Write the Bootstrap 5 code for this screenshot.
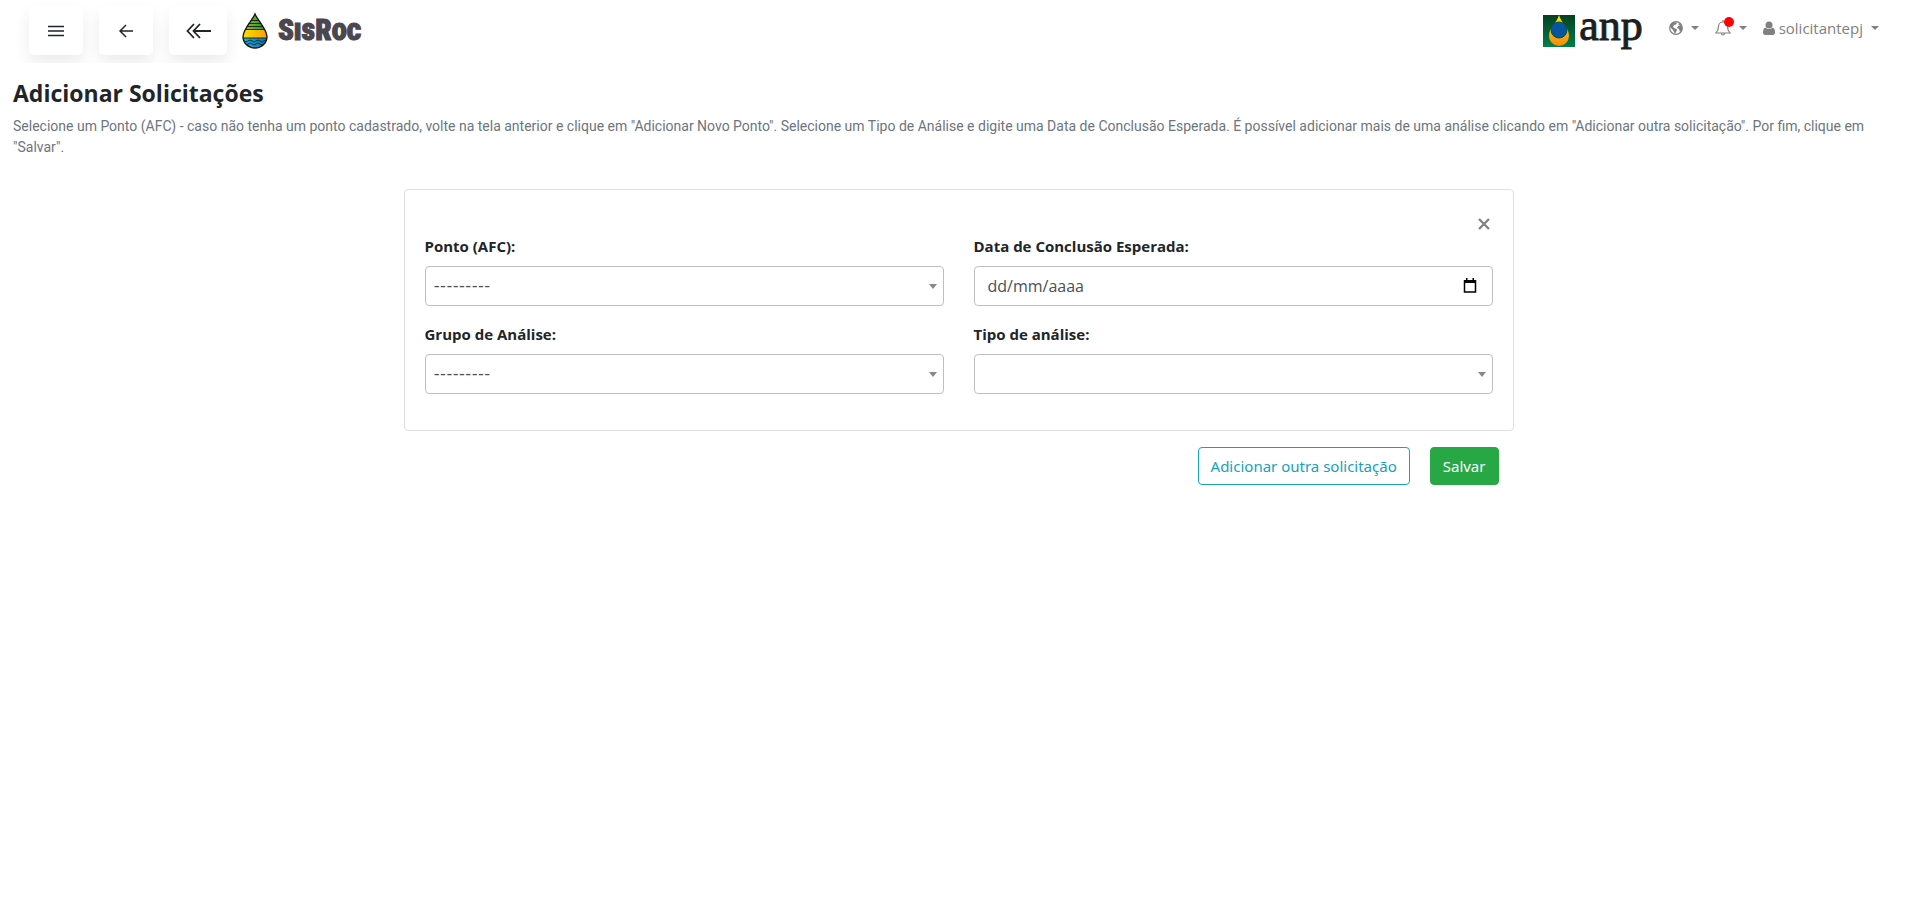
<!DOCTYPE html>
<html lang="pt-br">
<head>
<meta charset="utf-8">
<meta name="viewport" content="width=device-width, initial-scale=1">
<title>SisRoc - Adicionar Solicitações</title>
<link rel="stylesheet" href="https://cdn.jsdelivr.net/npm/bootstrap@5.3.0/dist/css/bootstrap.min.css">
<style>
  body { font-family: "Open Sans", "Noto Sans", sans-serif; font-size: 15px; line-height: 24px; color: #212529; background: #fff; }
  .topbar { height: 63px; padding: 6px 38px 8px 29px; overflow: hidden; }
  .nav-tile { width: 54px; height: 49px; border: 0; border-radius: 5px; background: #fff; color: #212529; box-shadow: 0 8px 16px rgba(0,0,0,.08); padding: 0 0 2px; }
  .nav-tile-wide { width: 58px; }
  .brand { margin-left: 15px; padding-top: 5px; gap: 10px; text-decoration: none; }
  .brand-name { font: 900 29px/38px "Roboto Condensed", "Open Sans Condensed", sans-serif; font-variant: small-caps; color: #4b4650; -webkit-text-stroke: 1px #4b4650; }
  .anp-link { margin-right: 26px; }
  .anp-name { font: 44px/39px "Liberation Serif", serif; color: #1d1d22; -webkit-text-stroke: 1px #1d1d22; }
  .tool-link { color: #808080; text-decoration: none; height: 24px; margin-top: 10px; }
  .tool-link .caret { border: 4px solid transparent; border-top-color: #808080; border-bottom: 0; }
  .alert-dot { position: absolute; top: -3px; right: -3px; width: 10px; height: 10px; border-radius: 50%; background: #f00; }
  .page-head { padding: 16px 40px 0 13px; }
  .page-title { font-size: 23px; line-height: 29px; font-weight: 700; margin: 0 0 8px; }
  .page-help { font-family: Roboto, sans-serif; font-size: 14px; line-height: 21px; color: #6c757d; margin: 0; }
  .form-area { max-width: 1110px; margin-top: 31px; }
  .request-card { border: 1px solid #dfdfdf; border-radius: 4px; padding: 20px; height: auto; }
  .card-close { border: 0; background: none; padding: 0 3px; height: 20px; color: #808080; line-height: 0; }
  .fields { --bs-gutter-x: 30px; row-gap: 16px; padding-bottom: 16px; }
  .fields label { font-weight: 700; margin-bottom: 8px; display: block; }
  .field-box { height: 40px; border: 1px solid #bfbfbf; border-radius: 4px; background-color: #fff; color: #495057; width: 100%; font-size: 16px; padding: 0 13px; }
  .field-box::placeholder { color: #495057; opacity: 1; }
  select.field-box { appearance: none; padding: 0 8px; font-family: Lato, sans-serif; font-size: 17px; background: #fff url("data:image/svg+xml,%3Csvg xmlns='http://www.w3.org/2000/svg' width='8' height='5'%3E%3Cpath d='M0 0h8L4 5z' fill='%23888'/%3E%3C/svg%3E") no-repeat right 6px center; }
  .date-icon { position: absolute; right: 16px; top: 12px; }
  .actions { padding: 16px 15px 0; gap: 20px; }
  .actions .btn { height: 38px; padding: 0 12px; border-radius: 4px; font-family: "Noto Sans", sans-serif; font-size: 15px; }
  .btn-add { color: #17a2b8; border-color: #17a2b8; background: #fff; }
  .btn-save { color: #fff; border-color: #28a745; background: #28a745; }
</style>
</head>
<body>
<header class="topbar d-flex justify-content-between align-items-start">
  <div class="d-flex">
    <div class="d-flex gap-3">
      <button class="nav-tile" type="button" aria-label="Menu"><svg width="16" height="14" viewBox="0 0 16 14" stroke="currentColor" stroke-width="1.4"><path d="M0 2.500h16M0 7h16M0 11.500h16"/></svg></button>
      <button class="nav-tile" type="button" aria-label="Voltar"><svg width="14" height="14" viewBox="0 0 14 14" fill="none" stroke="currentColor" stroke-width="1.5"><path d="M7 1L1 7l6 6M1 7h13"/></svg></button>
      <button class="nav-tile nav-tile-wide" type="button" aria-label="Voltar ao início"><svg width="25" height="16" viewBox="0 0 25 16" fill="none" stroke="currentColor" stroke-width="1.8"><path d="M8 1L1.500 8 8 15M14 1L7.500 8l6.500 7M7.500 8H25"/></svg></button>
    </div>
    <a class="brand d-flex" href="#">
      <svg width="26" height="38" viewBox="0 0 26 38" aria-hidden="true">
        <defs>
          <linearGradient id="leaf" x2="1"><stop stop-color="#a5c51c"/><stop offset="1" stop-color="#128a3c"/></linearGradient>
          <linearGradient id="sun" x2="1"><stop stop-color="#ffe000"/><stop offset="1" stop-color="#f99b00"/></linearGradient>
          <linearGradient id="sea" x2="1"><stop stop-color="#18b5e5"/><stop offset="1" stop-color="#0870b5"/></linearGradient>
          <clipPath id="drop"><path d="M13 3C10 10 1 18 1 26a12 11 0 0 0 24 0C25 18 16 10 13 3z"/></clipPath>
        </defs>
        <g clip-path="url(#drop)"><path fill="url(#leaf)" d="M0 0h26v19H0z"/><path fill="url(#sun)" d="M0 19h26v8H0z"/><path fill="url(#sea)" d="M0 27h26v11H0z"/>
        <path d="M0 9.500h26M0 12.500h26M0 15.500h26M0 18.500h26M0 27h26M2 30q2 2 4 0t4 0 4 0 4 0 4 0 4 0M2 33q2 2 4 0t4 0 4 0 4 0 4 0" fill="none" stroke="#1b2a1b" stroke-width="1"/></g>
        <path d="M13 3C10 10 1 18 1 26a12 11 0 0 0 24 0C25 18 16 10 13 3z" fill="none" stroke="#111" stroke-width="1.300"/>
      </svg>
      <span class="brand-name">SisRoc</span>
    </a>
  </div>
  <nav class="d-flex align-items-start" aria-label="Conta">
    <a href="#" class="anp-link d-flex text-decoration-none" aria-label="anp">
      <svg class="mt-2 me-1" width="32" height="34" viewBox="0 0 32 34"><defs><linearGradient id="flag" y2="1" x2="0"><stop stop-color="#063f20"/><stop offset="1" stop-color="#00804a"/></linearGradient><linearGradient id="oil" y2="1" x2="0"><stop stop-color="#ffe600"/><stop offset="1" stop-color="#f28a12"/></linearGradient></defs>
      <path fill="url(#flag)" d="M0 1h32v32H0z"/><path fill="url(#oil)" d="M16 1C14 9 6 13 6 22a10 10 0 0 0 20 0C26 13 18 9 16 1z"/><circle cx="16" cy="16" r="8" fill="#0555a0" stroke="#0b5238"/></svg>
      <span class="anp-name">anp</span>
    </a>
    <a href="#" class="tool-link d-flex align-items-center" aria-label="Idioma"><svg width="14" height="14" viewBox="0 0 14 14"><circle cx="7" cy="7" r="6.300" fill="#fff" stroke="#808080" stroke-width="1.200"/><path d="M1 4L4 1l4 .5-1 2-2 .5-1 2 2 1.500 2 .5-.5 2L6 13l-1-2-1-2-3-3zM9 3l2-1 2 4v3l-2 2-1-3-2-1 1-2 2-.5z" fill="#808080"/></svg><span class="caret ms-2"></span></a>
    <a href="#" class="tool-link d-flex align-items-center ms-3" aria-label="Notificações"><span class="position-relative d-flex"><svg width="16" height="16" viewBox="0 0 16 16" fill="none" stroke="#808080" stroke-width="1.200"><path d="M8 0v2M1 13c2-2 2.500-4 2.500-6.500a4.500 4.500 0 0 1 9 0C12.500 9 13 11 15 13zM6.500 13.500a1.500 1.500 0 0 0 3 0"/></svg><span class="alert-dot"></span></span><span class="caret ms-2"></span></a>
    <a href="#" class="tool-link d-flex align-items-center ms-3"><svg class="me-1" width="12" height="14" viewBox="0 0 12 14" fill="#808080"><circle cx="6" cy="4" r="3.500"/><path d="M2.500 6.500C.5 7 0 9 0 11.500 0 13 1 14 2 14h8c1 0 2-1 2-2.500C12 9 11.500 7 9.500 6.500c-2 2-5 2-7 0z"/></svg>solicitantepj<span class="caret ms-2"></span></a>
  </nav>
</header>
<main>
  <div class="page-head">
    <h1 class="page-title">Adicionar Solicitações</h1>
    <p class="page-help">Selecione um Ponto (AFC) - caso não tenha um ponto cadastrado, volte na tela anterior e clique em "Adicionar Novo Ponto". Selecione um Tipo de Análise e digite uma Data de Conclusão Esperada. É possível adicionar mais de uma análise clicando em "Adicionar outra solicitação". Por fim, clique em "Salvar".</p>
  </div>
  <form class="form-area mx-auto">
    <div class="card request-card">
      <div class="d-flex justify-content-end pt-1"><button class="card-close" type="button" aria-label="Remover"><svg width="12" height="12" viewBox="0 0 12 12" stroke="currentColor" stroke-width="2.200"><path d="M1 1l10 10M11 1L1 11"/></svg></button></div>
      <div class="row fields">
        <div class="col-md-6"><label for="ponto">Ponto (AFC):</label><select id="ponto" class="field-box"><option>---------</option></select></div>
        <div class="col-md-6"><label for="data">Data de Conclusão Esperada:</label><div class="position-relative"><input id="data" class="field-box" type="text" placeholder="dd/mm/aaaa"><svg class="date-icon" width="14" height="16" viewBox="0 0 14 16"><path d="M1.500 3h11v11h-11z" fill="none" stroke="#000" stroke-width="1.500"/><path d="M1 2h12v3H1zM3 0h1.500v3H3zM9.500 0H11v3H9.500z"/></svg></div></div>
        <div class="col-md-6"><label for="grupo">Grupo de Análise:</label><select id="grupo" class="field-box"><option>---------</option></select></div>
        <div class="col-md-6"><label for="tipo">Tipo de análise:</label><select id="tipo" class="field-box"><option></option></select></div>
      </div>
    </div>
    <div class="actions d-flex justify-content-end">
      <button class="btn btn-add" type="button">Adicionar outra solicitação</button>
      <button class="btn btn-save" type="submit">Salvar</button>
    </div>
  </form>
</main>
<script src="https://cdn.jsdelivr.net/npm/bootstrap@5.3.0/dist/js/bootstrap.bundle.min.js"></script>
</body>
</html>
